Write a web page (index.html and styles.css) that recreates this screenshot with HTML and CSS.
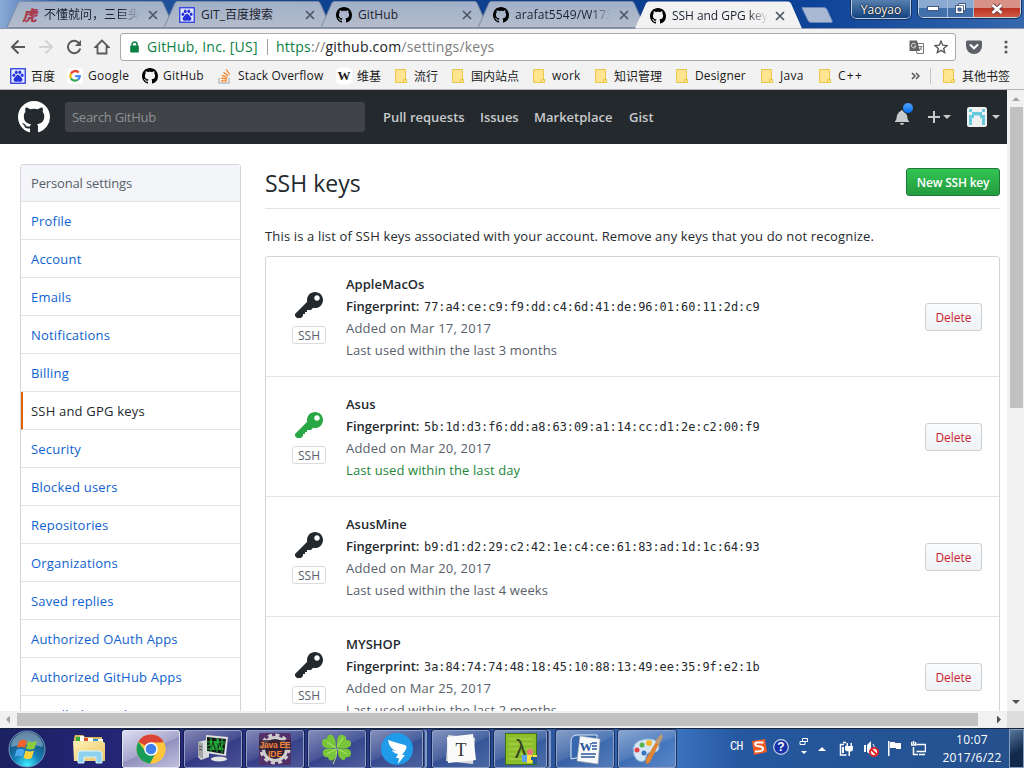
FILE: index.html
```
<!DOCTYPE html>
<html lang="zh-CN">
<head>
<meta charset="utf-8">
<title>SSH and GPG keys</title>
<link rel="stylesheet" href="styles.css">
</head>
<body>
<svg class="defs" width="0" height="0">
  <defs>
    <linearGradient id="tabFill" x1="0" y1="0" x2="0" y2="1"><stop offset="0" stop-color="#a0afc8"/><stop offset="1" stop-color="#b4bdcb"/></linearGradient>
    <radialGradient id="orb" cx=".5" cy=".95" r=".9"><stop offset="0" stop-color="#3ff0ff"/><stop offset=".4" stop-color="#1681b8"/><stop offset="1" stop-color="#163f66"/></radialGradient>
    <linearGradient id="folderFill" x1="0" y1="0" x2="1" y2="1"><stop offset="0" stop-color="#fff3b8"/><stop offset="1" stop-color="#e8c464"/></linearGradient>
  </defs>
  <symbol id="tab" viewBox="0 0 167 28"><path d="M0 28L11 3Q12 1 14 1H153Q155 1 156 3L167 28z" fill="url(#tabFill)"/><path d="M0 27.5L11 3Q12 1.500 14 1.500H153Q155 1.500 156 3L167 27.500z" fill="none" stroke="#7d8ba5"/></symbol>
  <symbol id="tab-on" viewBox="0 0 167 28"><path d="M0 28L11 3Q12 1 14 1H153Q155 1 156 3L167 28z" fill="#f2f2f2"/></symbol>
  <symbol id="mark" viewBox="0 0 16 16"><path fill-rule="evenodd" d="M8 0C3.58 0 0 3.58 0 8c0 3.54 2.29 6.53 5.47 7.59.4.07.55-.17.55-.38 0-.19-.01-.82-.01-1.49-2.01.37-2.53-.49-2.69-.94-.09-.23-.48-.94-.82-1.13-.28-.15-.68-.52-.01-.53.63-.01 1.08.58 1.23.82.72 1.21 1.87.87 2.33.66.07-.52.28-.87.51-1.07-1.78-.2-3.64-.89-3.64-3.95 0-.87.31-1.59.82-2.15-.08-.2-.36-1.02.08-2.12 0 0 .67-.21 2.2.82.64-.18 1.32-.27 2-.27.68 0 1.36.09 2 .27 1.53-1.04 2.2-.82 2.2-.82.44 1.1.16 1.92.08 2.12.51.56.82 1.27.82 2.15 0 3.07-1.87 3.75-3.65 3.95.29.25.54.73.54 1.48 0 1.07-.01 1.93-.01 2.2 0 .21.15.46.55.38A8.013 8.013 0 0 0 16 8c0-4.42-3.58-8-8-8z"/></symbol>
  <symbol id="key" viewBox="0 0 14 16"><path fill-rule="evenodd" d="M12.83 2.17C12.08 1.42 11.14 1.03 10 1c-1.13.03-2.08.42-2.83 1.17S6.04 3.86 6.01 5c0 .3.03.59.09.89L0 12v1l1 1h2l1-1v-1h1v-1h1v-1h2l1.09-1.11c.3.08.59.11.91.11 1.14-.03 2.08-.42 2.83-1.17S13.97 6.14 14 5c-.03-1.14-.42-2.08-1.17-2.83zM11 5.38c-.77 0-1.38-.61-1.38-1.38 0-.77.61-1.38 1.38-1.38.77 0 1.38.61 1.38 1.38 0 .77-.61 1.38-1.38 1.38z"/></symbol>
  <symbol id="x" viewBox="0 0 10 10"><path d="M1 1l8 8M9 1L1 9" stroke="#4e5765" stroke-width="1.700"/></symbol>
  <symbol id="folder" viewBox="0 0 12 14"><path d="M.5.5h10v10h1v3H.5z" fill="#ffe58f" stroke="#e8c64c"/><path d="M8.500 13.500v-3h3v3z" fill="#ffe58f" stroke="#e8c64c"/></symbol>
  <symbol id="paw" viewBox="0 0 16 16"><rect x=".75" y=".75" width="14.500" height="14.500" fill="#e6eaff" stroke="#2a3be0" stroke-width="1.300"/><g fill="#2433d8"><ellipse cx="3.900" cy="7.300" rx="1.400" ry="1.800"/><ellipse cx="6.300" cy="4.300" rx="1.400" ry="1.900"/><ellipse cx="9.800" cy="4.300" rx="1.400" ry="1.900"/><ellipse cx="12.200" cy="7.300" rx="1.400" ry="1.800"/><path d="M8 6.800c1.600 0 2.200 2 3.500 3 1.500 1.300 1 3.900-.8 3.900-1 0-1.700-.3-2.700-.3s-1.700.3-2.700.3c-1.800 0-2.300-2.600-.8-3.900C5.800 8.800 6.400 6.800 8 6.800z"/></g></symbol>
</svg>

<div class="browser">
  <div class="tabstrip">
    <div class="tab"><svg class="tab-bg"><use href="#tab"/></svg><span class="fav fav-hu">虎</span><span class="tab-title cjk fade">不懂就问，三巨头</span><svg class="close"><use href="#x"/></svg></div>
    <div class="tab"><svg class="tab-bg"><use href="#tab"/></svg><svg class="fav"><use href="#paw"/></svg><span class="tab-title cjk">GIT_百度搜索</span><svg class="close"><use href="#x"/></svg></div>
    <div class="tab"><svg class="tab-bg"><use href="#tab"/></svg><svg class="fav"><use href="#mark"/></svg><span class="tab-title">GitHub</span><svg class="close"><use href="#x"/></svg></div>
    <div class="tab"><svg class="tab-bg"><use href="#tab"/></svg><svg class="fav"><use href="#mark"/></svg><span class="tab-title fade">arafat5549/W173</span><svg class="close"><use href="#x"/></svg></div>
    <div class="tab tab-active"><svg class="tab-bg"><use href="#tab-on"/></svg><svg class="fav"><use href="#mark"/></svg><span class="tab-title tight fade">SSH and GPG keys</span><svg class="close"><use href="#x"/></svg></div>
    <svg class="newtab" viewBox="0 0 33 16"><path d="M1 .5h22q2 0 3 2l5 11q1 2-1 2H10q-2 0-3-2L1 1z" fill="#a9b9d3" stroke="#6e86b4"/></svg>
    <div class="user">Yaoyao</div>
    <div class="winbtns">
      <span class="wb"><svg width="12" height="6"><rect x=".5" y=".5" width="11" height="4" fill="#fff" stroke="#43567f"/></svg></span>
      <span class="wb wb-mid"><svg width="13" height="13"><path d="M4.500 1.500h7v7h-2v3h-8v-8h3zM4 6h3v3H4z" fill="#fff" fill-rule="evenodd" stroke="#43567f"/><path d="M4 3.500h5.500V9" fill="none" stroke="#43567f" stroke-width=".8"/></svg></span>
      <span class="wb wb-close"><svg width="14" height="12"><path d="M2.500 2l9 8M11.500 2l-9 8" stroke="#6a3a42" stroke-width="4.400"/><path d="M2.500 2l9 8M11.500 2l-9 8" stroke="#fff" stroke-width="2.800"/></svg></span>
    </div>
  </div>

  <div class="toolbar">
    <svg class="nav" viewBox="0 0 16 16"><path d="M15 8H2.500M8.500 1.500L2 8l6.500 6.500" fill="none" stroke="#5a5a5a" stroke-width="2"/></svg>
    <svg class="nav" viewBox="0 0 16 16"><path d="M1 8h12.500M7.500 1.500L14 8l-6.500 6.500" fill="none" stroke="#d3d3d3" stroke-width="2"/></svg>
    <svg class="nav" viewBox="0 0 16 16"><path d="M13.300 4.500A6.200 6.200 0 1 0 14.200 9.500" fill="none" stroke="#5a5a5a" stroke-width="2"/><path d="M15 1v6H9z" fill="#5a5a5a"/></svg>
    <svg class="nav" viewBox="0 0 16 16"><path d="M8 1.500L1.500 8H3.500v6.500h9V8h2z" fill="none" stroke="#5a5a5a" stroke-width="1.800"/></svg>
    <div class="omnibox">
      <svg class="lock" viewBox="0 0 9 12"><path d="M2 5V3.500a2.500 2.500 0 0 1 5 0V5" fill="none" stroke="#0b8043" stroke-width="1.500"/><rect x=".2" y="4.500" width="8.600" height="7" rx=".8" fill="#0b8043"/></svg>
      <span class="ev">GitHub, Inc. [US]</span><span class="evbar"></span>
      <span class="url"><span class="g">https</span><span class="d">://</span>github.com<span class="d">/settings/keys</span></span>
      <svg class="trans" viewBox="0 0 15 14"><path d="M6 3.500h8.500v10H8z" fill="#fff" stroke="#777"/><path d="M.5.5H8l3 10.500H.5z" fill="#636363"/><path d="M6.700 4.300A2.300 2.300 0 1 0 7 6.200H4.800" fill="none" stroke="#ddd"/><path d="M9.500 6.500h4M12.500 6.500q-.5 2.500-2 3.500m.5-2q1 1.500 2 2" fill="none" stroke="#777"/></svg>
      <svg class="star" viewBox="0 0 14 14"><path d="M7 1.200l1.700 4 4.300.4-3.300 2.800 1 4.200L7 10.400l-3.700 2.200 1-4.200L1 5.600l4.300-.4z" fill="none" stroke="#5a5a5a" stroke-width="1.400"/></svg>
    </div>
    <svg class="pocket" viewBox="0 0 16 14"><path d="M1.500.5h13q1.500 0 1.500 1.500v4a8 8 0 0 1-16 0V2Q0 .5 1.500.5z" fill="#5d6067"/><path d="M4.500 5L8 8.300 11.500 5" fill="none" stroke="#fff" stroke-width="2" stroke-linecap="round"/></svg>
    <svg class="dots" viewBox="0 0 4 14"><g fill="#5a5a5a"><circle cx="2" cy="2" r="1.600"/><circle cx="2" cy="7" r="1.600"/><circle cx="2" cy="12" r="1.600"/></g></svg>
  </div>

  <div class="bookmarks">
    <a class="bm b1"><svg class="i16"><use href="#paw"/></svg>百度</a>
    <a class="bm b2"><svg class="i16 round" viewBox="0 0 16 16"><g fill="none" stroke-width="2.300"><path d="M11.700 4.600A4.700 4.700 0 0 0 3.900 5.700" stroke="#ea4335"/><path d="M3.900 5.700a4.700 4.700 0 0 0 0 4.600" stroke="#fbbc05"/><path d="M3.900 10.300a4.700 4.700 0 0 0 7.200 1.200" stroke="#34a853"/><path d="M11.100 11.500a4.600 4.600 0 0 0 1.600-3.300H8.200" stroke="#4285f4"/></g></svg>Google</a>
    <a class="bm b3"><svg class="i16"><use href="#mark"/></svg>GitHub</a>
    <a class="bm b4"><svg class="i16" viewBox="0 0 16 16"><path d="M2 10v5h10v-5" fill="none" stroke="#bcbbbb" stroke-width="1.400"/><path d="M4 12.800h6M4.100 10.200l5.900.8M4.800 7.300l5.500 2.200M6.500 4.300l4.700 3.700M9.300 1.500l3.300 5" stroke="#f48024" stroke-width="1.300"/></svg>Stack Overflow</a>
    <a class="bm b5"><span class="wiki">W</span>维基</a>
    <a class="bm b6"><svg class="fo"><use href="#folder"/></svg>流行</a>
    <a class="bm b7"><svg class="fo"><use href="#folder"/></svg>国内站点</a>
    <a class="bm b8"><svg class="fo"><use href="#folder"/></svg>work</a>
    <a class="bm b9"><svg class="fo"><use href="#folder"/></svg>知识管理</a>
    <a class="bm b10"><svg class="fo"><use href="#folder"/></svg>Designer</a>
    <a class="bm b11"><svg class="fo"><use href="#folder"/></svg>Java</a>
    <a class="bm b12"><svg class="fo"><use href="#folder"/></svg>C++</a>
    <svg class="more" viewBox="0 0 9 8"><path d="M1 1l3 3-3 3M5 1l3 3-3 3" fill="none" stroke="#555" stroke-width="1.500"/></svg>
    <span class="bmbar"></span>
    <a class="bm b13"><svg class="fo"><use href="#folder"/></svg>其他书签</a>
  </div>
</div>

<div class="viewport">
  <div class="page">
    <header class="header">
      <svg class="logo"><use href="#mark"/></svg>
      <div class="search">Search GitHub</div>
      <nav class="hnav"><a class="n1">Pull requests</a><a class="n2">Issues</a><a class="n3">Marketplace</a><a class="n4">Gist</a></nav>
      <div class="bell"><svg width="14" height="16" viewBox="0 0 14 16"><path d="M14 12v1H0v-1l.73-.58c.77-.77.81-2.550 1.190-4.420C2.690 3.230 6 2 6 2c0-.55.45-1 1-1s1 .45 1 1c0 0 3.390 1.230 4.160 5 .38 1.880.42 3.660 1.190 4.420l.66.58H14zm-7 4c1.110 0 2-.89 2-2H5c0 1.110.89 2 2 2z" fill="#c9cacb"/></svg><i class="unread"></i></div>
      <svg class="plus" width="12" height="16" viewBox="0 0 12 16"><path d="M12 9H7v5H5V9H0V7h5V2h2v5h5v2z" fill="#c9cacb"/></svg><i class="caret"></i>
      <svg class="avatar" viewBox="0 0 20 20"><rect width="20" height="20" rx="2.500" fill="#f0f0f0"/><path d="M2 2h3v3h10V2h3v3h-3v3h3v10h-3v-7h-2V8.500H7V11H5v7H2V8h3V5H2z" fill="#67cbdc"/></svg><i class="caret"></i>
    </header>
    <div class="content">
      <nav class="menu">
        <div class="menu-head">Personal settings</div>
        <a>Profile</a><a>Account</a><a>Emails</a><a>Notifications</a><a>Billing</a><a class="on">SSH and GPG keys</a><a>Security</a><a>Blocked users</a><a>Repositories</a><a>Organizations</a><a>Saved replies</a><a>Authorized OAuth Apps</a><a>Authorized GitHub Apps</a><a>Installed GitHub Apps</a>
      </nav>
      <main class="main">
        <div class="subhead"><h2>SSH keys</h2><button class="btn-new">New SSH key</button></div>
        <p class="intro">This is a list of SSH keys associated with your account. Remove any keys that you do not recognize.</p>
        <ul class="keys">
          <li><div class="kind"><svg><use href="#key"/></svg><span>SSH</span></div><div class="info"><b>AppleMacOs</b><div><b class="fp">Fingerprint:</b><code>77:a4:ce:c9:f9:dd:c4:6d:41:de:96:01:60:11:2d:c9</code></div><div class="muted">Added on Mar 17, 2017</div><div class="muted">Last used within the last 3 months</div></div><button class="btn-del">Delete</button></li>
          <li class="recent"><div class="kind"><svg><use href="#key"/></svg><span>SSH</span></div><div class="info"><b>Asus</b><div><b class="fp">Fingerprint:</b><code>5b:1d:d3:f6:dd:a8:63:09:a1:14:cc:d1:2e:c2:00:f9</code></div><div class="muted">Added on Mar 20, 2017</div><div class="used">Last used within the last day</div></div><button class="btn-del">Delete</button></li>
          <li><div class="kind"><svg><use href="#key"/></svg><span>SSH</span></div><div class="info"><b>AsusMine</b><div><b class="fp">Fingerprint:</b><code>b9:d1:d2:29:c2:42:1e:c4:ce:61:83:ad:1d:1c:64:93</code></div><div class="muted">Added on Mar 20, 2017</div><div class="muted">Last used within the last 4 weeks</div></div><button class="btn-del">Delete</button></li>
          <li><div class="kind"><svg><use href="#key"/></svg><span>SSH</span></div><div class="info"><b>MYSHOP</b><div><b class="fp">Fingerprint:</b><code>3a:84:74:74:48:18:45:10:88:13:49:ee:35:9f:e2:1b</code></div><div class="muted">Added on Mar 25, 2017</div><div class="muted">Last used within the last 2 months</div></div><button class="btn-del">Delete</button></li>
        </ul>
      </main>
    </div>
  </div>
  <div class="vscroll"><i class="up"></i><i class="vthumb"></i><i class="down"></i></div>
</div>
<div class="hscroll"><i class="left"></i><i class="hthumb"></i><i class="right"></i><i class="corner"></i></div>

<div class="taskbar">
  <svg class="start" viewBox="0 0 38 38"><circle cx="19" cy="19" r="18" fill="url(#orb)" stroke="#6f9cbf"/><path d="M3 17a16 15 0 0 1 32 0Q19 12 3 17z" fill="#c8dceb" opacity=".45"/><path d="M11 11q4-3 8 0l-2 7q-4-2-8 0z" fill="#f0622d"/><path d="M20 11q4 2.500 9-.5l-2.500 8q-4 2-8.500 0z" fill="#8ccb3a"/><path d="M8.500 20q4-2.500 8 0l-2 7q-4-2.500-8 0z" fill="#4aa9ee"/><path d="M17.500 20.500q4.500 2 8.500 0l-2.300 7.500q-4 2-8.200 0z" fill="#ffd23c"/></svg>
  <svg class="explorer" viewBox="0 0 34 32"><path d="M2 5l1-3h8l2 2h17v23H2z" fill="#d9b55c"/><path d="M4 4h6v5H4z" fill="#2fab3c"/><path d="M12 5h6v4h-6z" fill="#de4b34"/><path d="M20 6h7v4h-7z" fill="#338fd6"/><path d="M8 3h4v5H8zM16 5h5v4h-5zM26 6h5v4h-5z" fill="#fff"/><path d="M1 8h29l3 2v18H2z" fill="url(#folderFill)"/><path d="M6 30V21q0-3 3-3h18q3 0 3 3v9h-6v-6H12v6z" fill="#8ed2ef" stroke="#d5f5ff"/></svg>
  <div class="tasks">
    <span class="task task-on"><svg viewBox="0 0 32 32"><circle cx="16" cy="16" r="14.500" fill="#fbc63b"/><path d="M16 16L3.400 8.800A14.500 14.500 0 0 1 28.600 8.800L27 10H16z" fill="#dc4437"/><path d="M3.400 8.800A14.500 14.500 0 0 0 15 30.500l6.200-11.500-5.200-3-5.200 3z" fill="#189d58"/><path d="M28.800 9.500H16v6.500l5.500 3-6 11.500A14.500 14.500 0 0 0 28.800 9.500z" fill="#fbc63b"/><circle cx="16" cy="16" r="6.800" fill="#fff"/><circle cx="16" cy="16" r="5.300" fill="#3f80ed"/></svg></span>
    <span class="task"><svg viewBox="0 0 32 32"><path d="M1 9l8-2 3 2v15l-8 3-3-3z" fill="#d9dadb"/><path d="M1 9l5 1v16l-5-3z" fill="#a3a4a6"/><path d="M2 13l3 1M2 16l3 1" stroke="#555"/><ellipse cx="22" cy="26" rx="8" ry="2.500" fill="#e3e3e3"/><path d="M9 2l22 2-2 19-20-3z" fill="#e0e0e0"/><path d="M10 4l19 2-2 15-17-3z" fill="#101d18"/><path d="M10 13l3-1 1-5 2 10 2-9 1 7 2-9 2 11 2-6h3M10 9h18M10 16h17M14 5v14M20 5v14M25 6v14" fill="none" stroke="#28c23d" stroke-width=".9"/></svg></span>
    <span class="task"><svg viewBox="0 0 32 32"><rect width="32" height="32" rx="2" fill="#523169"/><circle cx="16" cy="16" r="11.500" fill="#302238" stroke="#cfcfcf" stroke-width="3"/><circle cx="16" cy="16" r="14" fill="none" stroke="#cfcfcf" stroke-width="3" stroke-dasharray="4 3.330"/><path d="M0 7h32v10H0z" fill="#362031" opacity=".8"/><text class="jee" x="16" y="15" textLength="31">Java EE</text><text class="jee" x="16" y="23.500">IDE</text></svg></span>
    <span class="task"><svg viewBox="0 0 32 32"><g fill="#79c63b"><path d="M15 15Q0 17 1 9q1-4 5-3 0-5 5-4 4 3 4 13z"/><path d="M16 15Q15 0 22 2q4 1 3 5 6 0 5 5-3 5-14 3z"/><path d="M15 16Q0 14 2 21q1 4 5 3 1 5 5 3 4-3 3-11z"/><path d="M17 16q14-2 13 5-1 4-5 3-1 5-5 2-4-4-3-10z"/></g><path d="M16 15q0 10-4 16M15 15L6 9M16 14l6-9M15 16l-9 5M17 16l9 5" fill="none" stroke="#b4e774"/></svg></span>
    <span class="task stack"><svg viewBox="0 0 32 32"><circle cx="16" cy="16" r="16" fill="#1f9be9"/><path d="M7 7q9 3 17 5 3 1 0 6l-3 4h3l-7 9 1-6h-3l2-4q-5-1-6-4l4 1q-7-3-8-11z" fill="#fff"/></svg></span>
    <span class="task"><svg viewBox="0 0 32 32"><path d="M3 2l27 3-2 26-27-3z" fill="#dadada"/><path d="M2 4l26-3 3 26-28 3z" fill="#fafafa"/><text class="typora" x="16" y="23">T</text></svg></span>
    <span class="task stack"><svg viewBox="0 0 32 32"><rect x=".5" y=".5" width="31" height="31" fill="#8cbe2b" stroke="#436e18"/><path d="M4 6h24M4 11h24M4 16h24M4 21h24M4 26h15" stroke="#afd657"/><text class="lambda" x="16" y="25">λ</text><path d="M17 22h7v7h-7z" fill="#5ea1f2"/><circle cx="25" cy="19" r="3" fill="#ed737b"/><path d="M22 22h5v8h-5zM28 22h4v5h-4z" fill="#ffdf47"/><path d="M26 24h6v3h-6zM28 27h4v4h-4z" fill="#245c9e"/></svg></span>
    <span class="task"><svg viewBox="0 0 32 32"><path d="M2 26V8q0-6 7-6h19v4H12v18z" fill="#3768af" stroke="#dbe8f7"/><path d="M11 3l20 3-2 25-21-3z" fill="#f8f9fb" stroke="#aaa" stroke-width=".6"/><text class="word" x="17" y="18">W</text><path d="M23 10h5M23 13h5M23 16h5M12 21h15M12 24h14" stroke="#2b559d" stroke-width="1.500"/></svg></span>
    <span class="task"><svg viewBox="0 0 32 32"><path d="M3 22Q-1 8 15 6q14-1 13 9-1 5-7 4-5 0-6 5-1 6-7 4-3-1-5-6z" fill="#d4e6f6" stroke="#8db7dc"/><circle cx="6" cy="17" r="2.500" fill="#e24343"/><circle cx="11" cy="12" r="2.500" fill="#59b44a"/><circle cx="18" cy="10" r="3" fill="#f3b52a"/><circle cx="13" cy="20" r="2.500" fill="#3874be"/><path d="M16 31q-3-2 0-7l9-15 3 2-8 16q-2 4-4 4z" fill="#df8434"/><path d="M24 8l5-6 2-1 1 3-4 8z" fill="#b99a7b"/></svg></span>
  </div>
  <div class="tray">
    <span class="ch">CH</span>
    <svg class="sogou" viewBox="0 0 16 16"><path d="M1 2l13-2 2 13-13 3z" fill="#f35b22"/><path d="M12.500 3.500H6Q3.500 4 4.500 6q1 1.500 5 1.500 3.500 1 2 3.500-1 1.500-7.500 1.500" fill="none" stroke="#fff" stroke-width="2.200"/></svg>
    <svg class="help" viewBox="0 0 16 16"><circle cx="8" cy="8" r="7.300" fill="#1532a8" stroke="#c9d2e5" stroke-width="1.200"/><text class="q" x="8" y="12">?</text></svg>
    <svg class="restore" viewBox="0 0 9 17"><path d="M3.500.5h5v3h-5zM1 3.500h5v3H1z" fill="none" stroke="#fff"/><path d="M2 13h6l-3 3z" fill="#fff"/></svg>
    <svg class="uparr" viewBox="0 0 8 4"><path d="M0 4l4-4 4 4z" fill="#fff"/></svg>
    <svg class="power" viewBox="0 0 15 16"><path d="M5 3.500H1.500v10.500h6M4 1.500h3" fill="none" stroke="#fff" stroke-width="1.500"/><path d="M6 5h8v3q0 2-2 2.500H11V15H9.500v-4.500Q6 10 6 8zM7.500 2H9v3H7.500zM11.500 2H13v3h-1.500zM3 6h2v6H3z" fill="#fff"/></svg>
    <svg class="vol" viewBox="0 0 16 16"><path d="M1 4h2v7H1zM4 4l4-4v14l-4-3z" fill="#fff"/><path d="M10 3q2 2 1 5" stroke="#fff" fill="none"/><circle cx="11" cy="11" r="4" fill="#fff" stroke="#dc2a2a" stroke-width="2"/><path d="M8 8l6 6" stroke="#dc2a2a" stroke-width="2"/></svg>
    <svg class="flag" viewBox="0 0 15 15"><path d="M1 0h1.500v15H1zM3 1h5v1h6v6H9V7H3z" fill="#fff"/></svg>
    <svg class="net" viewBox="0 0 15 15"><path d="M5.500 3.500h9v7h-9M8 13.500h6M2.500 6v7.500H7M.5 1v3h4V1M2.500 0v3" fill="none" stroke="#fff" stroke-width="1.500"/></svg>
    <div class="clock"><span>10:07</span><span class="date">2017/6/22</span></div>
    <i class="peek"></i>
  </div>
</div>
</body>
</html>
```
FILE: styles.css
```
* { box-sizing: border-box; }
body { margin: 0; width: 1024px; height: 768px; overflow: hidden; font-family: "Open Sans", "Noto Sans CJK SC", sans-serif; font-size: 13px; color: #24292e; background: #fff; display: flex; flex-direction: column; }
.defs { position: absolute; }
svg, i { display: block; flex: none; }
button { font-family: inherit; padding: 0; }

/* browser chrome */
.browser { height: 90px; flex: none; background: #f2f2f2; border-bottom: 1px solid #b6b4b6; }
.tabstrip { height: 29px; display: flex; align-items: flex-start; padding-left: 7px; background: linear-gradient(90deg, #8aaad6 0, #2c5ba5 60px, #10438f 300px, #0b3c8e 700px, #0e4499 820px, #3568ad 1024px); border-bottom: 1px solid #8b95a5; }
.tab { position: relative; width: 167px; height: 28px; margin-right: -10px; display: flex; align-items: center; padding: 2px 0 0 15px; flex: none; white-space: nowrap; font-size: 12px; color: #1b2330; }
.tab-bg { position: absolute; left: 0; top: 0; width: 167px; height: 28px; }
.tab-active { height: 29px; z-index: 2; }
.tab-active .tab-bg { height: 29px; }
.fav { position: relative; width: 16px; height: 16px; margin-right: 6px; flex: none; }
.fav-hu { color: #a83c4c; font: italic 900 15px/16px "Noto Sans CJK SC", sans-serif; }
.tab-title { position: relative; width: 98px; overflow: hidden; letter-spacing: .1px; line-height: 18px; }
.tab-title.cjk { letter-spacing: 0; }
.tab-title.tight { letter-spacing: -.05px; }
.fade { mask-image: linear-gradient(90deg, #000 78%, transparent 98%); }
.close { position: relative; width: 10px; height: 10px; margin-left: 6px; }
.tab-active .close { margin-left: 5px; }
.newtab { width: 33px; height: 16px; margin: 7px 0 0 9px; }
.user { margin-left: 17px; width: 60px; height: 19px; border: 1px solid #b9cbe4; border-top: 0; border-radius: 0 0 5px 5px; background: linear-gradient(#577fae, #144381); color: #fff; text-align: center; font-size: 12px; line-height: 19px; text-shadow: 0 0 2px #000, 0 0 1px #000; outline: 1px solid #17325f; }
.winbtns { display: flex; margin-left: 7px; width: 103px; height: 18px; border: 1px solid #c6d2e5; border-top: 0; border-radius: 0 0 5px 5px; outline: 1px solid #17325f; overflow: hidden; }
.wb { width: 29px; display: flex; align-items: center; justify-content: center; background: linear-gradient(#8baad1 50%, #416fa9 50%); border-right: 1px solid #a9bdd8; }
.wb-mid { width: 27px; }
.wb-close { width: 46px; border: 0; background: linear-gradient(#d89185 45%, #bd3324 50%, #cd5a3f); }
.toolbar { height: 34px; display: flex; align-items: center; padding: 2px 0 0 10px; }
.nav { width: 16px; height: 16px; margin-right: 12px; }
.omnibox { width: 836px; height: 28px; margin-left: -2px; border: 1px solid #a9a9a9; border-radius: 3px; background: #fff; display: flex; align-items: center; font-size: 14px; white-space: nowrap; letter-spacing: .22px; padding-bottom: 1px; }
.lock { width: 9px; height: 12px; margin-left: 9px; }
.ev { margin-left: 8px; color: #0b8043; width: 111px; }
.evbar { width: 1px; height: 16px; background: #a0a0a0; margin: 0 8px 0 9px; }
.url { width: 633px; color: #222; }
.g { color: #0b8043; } .d { color: #7d7d7d; }
.trans { width: 15px; height: 14px; }
.star { width: 14px; height: 14px; margin-left: 10px; }
.pocket { width: 16px; height: 14px; margin-left: 10px; }
.dots { width: 4px; height: 14px; margin-left: 22px; }
.bookmarks { height: 26px; display: flex; align-items: center; padding-left: 10px; font-size: 12px; color: #1a1a1a; }
.bm { display: flex; align-items: center; white-space: nowrap; height: 26px; flex: none; padding-bottom: 1px; }
.i16 { width: 16px; height: 16px; margin-right: 5px; }
.round { background: #fff; border-radius: 4px; }
.wiki { width: 16px; height: 16px; margin-right: 5px; background: #fff; border-radius: 4px; font: 700 13px/16px "Liberation Serif", serif; text-align: center; }
.fo { width: 12px; height: 14px; margin-right: 7px; }
.b1 { width: 57px; } .b2 { width: 75px; letter-spacing: .3px; } .b3 { width: 75px; letter-spacing: .2px; } .b4 { width: 119px; letter-spacing: .15px; } .b5 { width: 59px; }
.b6 { width: 57px; } .b7 { width: 81px; } .b8 { width: 62px; letter-spacing: .2px; } .b9 { width: 81px; } .b10 { width: 85px; letter-spacing: .15px; } .b11 { width: 58px; letter-spacing: .3px; } .b12 { width: 92px; letter-spacing: 1.300px; }
.more { width: 9px; height: 8px; }
.bmbar { width: 1px; height: 16px; background: #c4c4c4; margin: 0 12px 0 10px; }

/* page */
.viewport { height: 621px; flex: none; display: flex; overflow: hidden; }
.page { width: 1007px; height: 621px; overflow: hidden; flex: none; }
.header { height: 54px; background: #24292e; display: flex; align-items: center; padding-left: 18px; }
.logo { width: 32px; height: 32px; fill: #fff; }
.search { margin-left: 15px; width: 300px; height: 30px; border-radius: 3px; background: #404448; color: #8e9193; padding-left: 7px; line-height: 30px; letter-spacing: -.27px; }
.hnav { display: flex; margin-left: 18px; color: #c8c9cb; font-weight: 600; width: 512px; }
.n1 { width: 97px; } .n2 { width: 54px; } .n3 { width: 95px; }
.bell { position: relative; }
.unread { position: absolute; left: 7px; top: -7px; width: 12px; height: 12px; border: 1px solid #24292e; border-radius: 50%; background: linear-gradient(#54a3ff, #006eed); }
.plus { margin-left: 19px; }
.caret { width: 8px; height: 4px; margin-left: 3px; background: #c9cacb; clip-path: polygon(0 0, 100% 0, 50% 100%); }
.avatar { width: 20px; height: 20px; margin-left: 16px; }
.avatar + .caret { margin-left: 5px; }
.content { display: flex; padding: 20px 0 0 20px; gap: 24px; align-items: flex-start; }
.menu { width: 221px; border: 1px solid #d1d5da; border-radius: 3px; flex: none; }
.menu-head, .menu a { display: block; height: 38px; padding-left: 10px; line-height: 39px; border-bottom: 1px solid #e1e4e8; color: #0f62d0; letter-spacing: .2px; }
.menu-head { height: 37px; line-height: 37px; background: #f3f5f9; color: #586069; font-weight: 500; letter-spacing: -.15px; }
.menu .on { color: #24292e; border-left: 2px solid #e36209; padding-left: 8px; letter-spacing: .2px; font-weight: 500; }
.main { width: 735px; }
.subhead { height: 45px; border-bottom: 1px solid #e1e4e8; display: flex; justify-content: space-between; }
h2 { margin: 0; font-weight: 400; font-size: 23px; line-height: 38px; }
.btn-new { width: 94px; height: 28px; margin-top: 4px; border: 1px solid #23763a; border-radius: 3px; background: linear-gradient(#31c452, #269f42 90%); color: #fff; font-size: 12px; font-weight: 600; letter-spacing: -.2px; }
.intro { margin: 17px 0 9px; line-height: 21px; white-space: nowrap; letter-spacing: .155px; }
.keys { list-style: none; margin: 0; padding: 0; border: 1px solid #d1d5da; border-radius: 3px; }
.keys li { height: 120px; border-bottom: 1px solid #e1e4e8; display: flex; align-items: flex-start; padding: 16px 17px 0 26px; }
.kind { width: 54px; padding-top: 17px; }
.kind svg { width: 28px; height: 32px; margin-left: 3px; fill: #24292e; }
.recent .kind svg { fill: #28a745; }
.kind span { display: block; width: 34px; height: 18px; margin-top: 4px; border: 1px solid #d9dadc; border-radius: 3px; text-align: center; font-size: 12px; line-height: 17px; color: #586069; }
.info { flex: 1; line-height: 22px; white-space: nowrap; }
.info b { font-weight: 600; }
.info > b { display: block; }
.fp { display: inline-block; width: 78px; }
code { font: 11.900px/20px "DejaVu Sans Mono", monospace; letter-spacing: -.02px; }
.muted { color: #586069; letter-spacing: .12px; } .used { color: #22863a; letter-spacing: .1px; }
.info .muted:nth-child(3) { letter-spacing: .2px; }
.btn-del { width: 57px; height: 28px; margin-top: 30px; border: 1px solid #cdcfd1; border-radius: 3px; background: linear-gradient(#fafbfc, #eff3f6 90%); color: #cb2431; font-size: 12px; }
.vscroll { width: 17px; background: #f1f1f1; display: flex; flex-direction: column; align-items: center; padding-left: 1px; }
.up, .down { width: 8px; height: 4px; background: #a3a3a3; clip-path: polygon(50% 0, 100% 100%, 0 100%); margin-top: 7px; }
.vthumb { width: 13px; height: 301px; margin-top: 6px; background: #c1c1c1; }
.down { background: #505050; clip-path: polygon(0 0, 100% 0, 50% 100%); margin-top: 292px; }
.hscroll { height: 17px; flex: none; background: #f1f1f1; display: flex; align-items: center; padding-left: 6px; }
.left, .right { width: 4px; height: 8px; background: #a3a3a3; clip-path: polygon(100% 0, 100% 100%, 0 50%); }
.hthumb { margin-left: 7px; width: 961px; height: 13px; background: #c1c1c1; }
.right { background: #505050; clip-path: polygon(0 0, 100% 50%, 0 100%); margin-left: 19px; }
.corner { width: 17px; height: 17px; background: #dcdcdc; margin-left: auto; }

/* taskbar */
.taskbar { height: 40px; flex: none; display: flex; align-items: center; border-top: 1px solid #16253d; background: linear-gradient(90deg, #1c2162 0, #252678 130px, #2b3a86 330px, #284f94 520px, #3971bd 680px, #25589f 740px, #25508b 1024px); padding-left: 8px; }
.start { width: 38px; height: 38px; }
.explorer { width: 34px; height: 32px; margin-left: 26px; }
.tasks { display: flex; gap: 4px; margin-left: 16px; }
.task { width: 58px; height: 38px; border: 1px solid #8d9fc8; border-radius: 2px; background: linear-gradient(155deg, rgba(255,255,255,.42), rgba(255,255,255,.14) 50%, rgba(255,255,255,.06) 52%, rgba(255,255,255,.16)); display: flex; align-items: center; justify-content: center; outline: 1px solid rgba(10,18,50,.6); }
.task svg { width: 32px; height: 32px; }
.task-on { background: linear-gradient(155deg, #dcdcf0, #a7a7cd 50%, #9191bf 52%, #c0bfdd); border-color: #e2e3f3; }
.stack { width: 53px; margin-right: 5px; box-shadow: 3px 0 0 -1px #39568f, 4px 0 0 0 #8398c2; }
.jee { font: 700 8.500px "Liberation Sans", sans-serif; fill: #f6843a; text-anchor: middle; }
.typora { font: 18px "Liberation Serif", serif; fill: #333; text-anchor: middle; }
.lambda { font: 25px "Liberation Sans", sans-serif; fill: #314522; text-anchor: middle; }
.word { font: 700 13px "Liberation Serif", serif; fill: #26539b; text-anchor: middle; }
.q { font: 700 12px "Liberation Sans", sans-serif; fill: #fff; text-anchor: middle; }
.tray { display: flex; align-items: center; color: #fff; margin-left: auto; height: 39px; }
.ch { font: 12px "Liberation Mono", monospace; letter-spacing: -.9px; width: 14px; margin-bottom: 3px; }
.sogou { width: 16px; height: 16px; margin: 0 6px 4px 7px; }
.help { width: 16px; height: 16px; margin-bottom: 4px; }
.restore { width: 9px; height: 17px; margin: 0 10px 5px 10px; }
.uparr { width: 8px; height: 4px; margin-right: 13px; }
.power { width: 15px; height: 16px; margin-right: 9px; }
.vol { width: 16px; height: 16px; margin-right: 8px; }
.flag { width: 15px; height: 15px; margin-right: 9px; }
.net { width: 15px; height: 15px; margin-right: 12px; }
.clock { width: 68px; display: flex; flex-direction: column; align-items: center; font-size: 12px; line-height: 18px; letter-spacing: .25px; }
.peek { width: 15px; height: 39px; margin-left: 3px; border: 1px solid #879fbf; background: linear-gradient(150deg, #57799f, #12294b 60%); }
```
